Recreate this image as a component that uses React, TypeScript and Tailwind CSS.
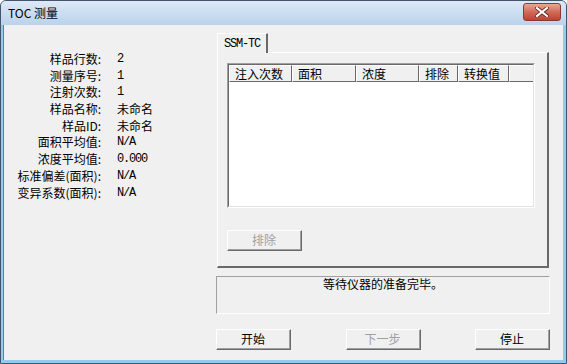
import React from 'react';

const cjk = "font-['Noto_Sans_CJK_SC','Microsoft_YaHei',sans-serif]";
const mono = "font-['Liberation_Mono','Noto_Sans_CJK_SC',monospace] text-[12px] tracking-[-1.2px]";

const rows: { label: string; value: string; isText?: boolean }[] = [
  { label: '样品行数:', value: '2' },
  { label: '测量序号:', value: '1' },
  { label: '注射次数:', value: '1' },
  { label: '样品名称:', value: '未命名', isText: true },
  { label: '样品ID:', value: '未命名', isText: true },
  { label: '面积平均值:', value: 'N/A' },
  { label: '浓度平均值:', value: '0.000' },
  { label: '标准偏差(面积):', value: 'N/A' },
  { label: '变异系数(面积):', value: 'N/A' },
];

const columns = [
  { title: '注入次数', w: 'w-[63px]' },
  { title: '面积', w: 'w-[64px]' },
  { title: '浓度', w: 'w-[63px]' },
  { title: '排除', w: 'w-[39px]' },
  { title: '转换值', w: 'w-[51px]' },
];

// classic raised 3D push button
const Button: React.FC<{ label: string; disabled?: boolean }> = ({ label, disabled }) => (
  <div className="w-[75px] h-[21px] border border-t-white border-l-white border-r-[#696969] border-b-[#696969] bg-[#f0f0f0]">
    <div
      className={`h-full flex items-center justify-center border-r border-b border-[#a0a0a0] text-[12px] leading-none ${cjk} ${
        disabled ? 'text-[#a0a0a0]' : 'text-black'
      }`}
    >
      {label}
    </div>
  </div>
);

export default function App() {
  return (
    <div className="w-[567px] h-[364px] bg-[#8fcdf0] rounded-t-[6px] border border-[#44546a] flex flex-col overflow-hidden">
      {/* title bar */}
      <div className="h-[24px] shrink-0 flex items-center justify-between pl-[7px] pr-[5px] bg-gradient-to-b from-[#dde9f6] to-[#bad2ec]">
        <span className="text-[12px] text-black font-['Noto_Sans_CJK_SC',sans-serif] leading-none">TOC 测量</span>
        <div className="w-[38px] h-[18px] mb-[2px] rounded-[3px] border border-[#8a3a32] bg-gradient-to-b from-[#e8a898] via-[#d06a58] to-[#c0402e] flex items-center justify-center">
          <svg width="14" height="10" viewBox="0 0 14 10">
            <path d="M2 1 L12 9 M12 1 L2 9" stroke="#5a1a14" strokeWidth="3.6" strokeLinecap="square" />
            <path d="M2 1 L12 9 M12 1 L2 9" stroke="#ffffff" strokeWidth="2.2" strokeLinecap="square" />
          </svg>
        </div>
      </div>

      {/* client area */}
      <div className="flex-1 mx-[2px] mr-[3px] mb-[3px] bg-[#f0f0f0] border-l border-[#6c7c90] flex text-black">
        {/* left info column */}
        <div className="w-[212px] shrink-0 pt-[26px]">
          <div className="grid grid-cols-[97px_1fr] gap-x-[16px]">
            {rows.map((r) => (
              <React.Fragment key={r.label}>
                <div className={`h-[16.7px] leading-[16.7px] text-right text-[12px] whitespace-nowrap ${cjk}`}>{r.label}</div>
                <div className={`h-[16.7px] leading-[16.7px] ${r.isText ? `text-[12px] ${cjk}` : mono}`}>{r.value}</div>
              </React.Fragment>
            ))}
          </div>
        </div>

        {/* right column */}
        <div className="w-[334px] shrink-0 pt-[8px] flex flex-col">
          {/* tab header */}
          <div className="flex">
            <div className="ml-[1px] w-[51px] h-[20px] border-l border-t border-white border-r-[2px] border-r-[#696969] rounded-tr-[1px] flex items-center pl-[6px] -mb-[1px] bg-[#f0f0f0] relative z-10">
              <span className="font-['Liberation_Mono',monospace] text-[12px] tracking-[-1.2px] leading-none">SSM-TC</span>
            </div>
          </div>
          {/* tab panel */}
          <div className="ml-[1px] w-[332px] h-[216px] border-l border-t border-white border-r-[2px] border-b-[2px] border-r-[#696969] border-b-[#696969] pl-[9px] pt-[10px]">
            {/* list view */}
            <div className="w-[308px] h-[145px] border border-t-[#a0a0a0] border-l-[#a0a0a0] border-r-white border-b-white">
              <div className="h-full border border-t-[#696969] border-l-[#696969] border-r-[#e3e3e3] border-b-[#e3e3e3] bg-white flex flex-col">
                <div className="h-[17px] flex bg-[#f0f0f0]">
                  {columns.map((c) => (
                    <div
                      key={c.title}
                      className={`${c.w} h-full border-r border-b border-[#696969] border-t border-l border-t-white border-l-white flex items-center pl-[5px] text-[12px] leading-none ${cjk}`}
                    >
                      {c.title}
                    </div>
                  ))}
                  <div className="flex-1 h-full border-b border-[#696969] border-t border-l border-t-white border-l-white" />
                </div>
              </div>
            </div>
            <div className="mt-[22px]">
              <Button label="排除" disabled />
            </div>
          </div>

          {/* status box */}
          <div className="mt-[8px] w-[334px] h-[38px] border border-t-[#a0a0a0] border-l-[#a0a0a0] border-r-white border-b-white">
            <div className={`text-center text-[12px] leading-[13px] ${cjk}`}>等待仪器的准备完毕。</div>
          </div>

          {/* bottom buttons */}
          <div className="mt-[15px] w-[334px] flex justify-between">
            <Button label="开始" />
            <Button label="下一步" disabled />
            <Button label="停止" />
          </div>
        </div>
      </div>
    </div>
  );
}
